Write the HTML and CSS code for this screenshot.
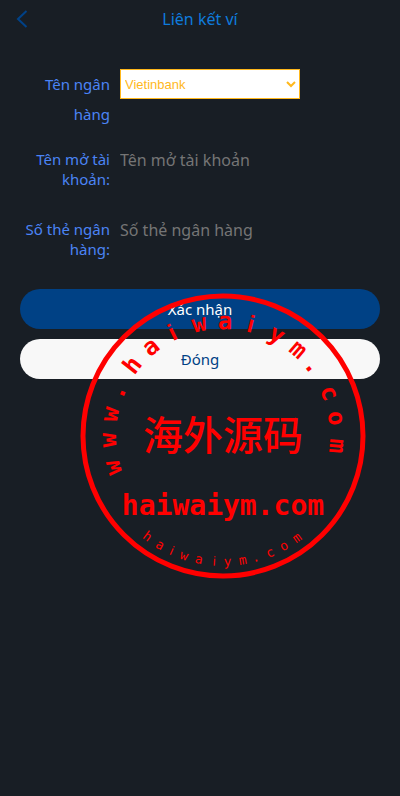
FILE: index.html
```html
<!doctype html>
<html lang="vi">
<head>
  <meta charset="utf-8">
  <meta name="viewport" content="width=device-width, initial-scale=1">
  <title>Liên kết ví</title>
  <link rel="stylesheet" href="styles.css">
</head>
<body>
  <header class="navbar">
    <button class="back" type="button" aria-label="Back">
      <svg width="12" height="18" viewBox="0 0 12 18"><path d="M10.500 1 2 9l8.500 8" fill="none" stroke="currentColor" stroke-width="2"/></svg>
    </button>
    <h1>Liên kết ví</h1>
  </header>

  <form class="bank-form">
    <div class="field field-bank">
      <label for="bank">Tên ngân hàng</label>
      <select id="bank">
        <option>Vietinbank</option>
      </select>
    </div>
    <div class="field">
      <label for="owner">Tên mở tài khoản:</label>
      <input id="owner" type="text" placeholder="Tên mở tài khoản">
    </div>
    <div class="field">
      <label for="card">Số thẻ ngân hàng:</label>
      <input id="card" type="text" placeholder="Số thẻ ngân hàng">
    </div>
    <div class="actions">
      <button class="btn btn-confirm" type="submit">Xác nhận</button>
      <button class="btn btn-close" type="button">Đóng</button>
    </div>
  </form>

  <svg class="stamp" width="286" height="286" viewBox="-143 -143 286 286">
    <circle r="140" fill="none" stroke="currentColor" stroke-width="5"/>
    <g class="stamp-top">
      <text y="-107" transform="rotate(-106)">w</text>
      <text y="-107" transform="rotate(-92)">w</text>
      <text y="-107" transform="rotate(-79)">w</text>
      <text y="-107" transform="rotate(-67)">.</text>
      <text y="-107" transform="rotate(-52)">h</text>
      <text y="-107" transform="rotate(-39)">a</text>
      <text class="thin" y="-107" transform="rotate(-26)">i</text>
      <text y="-107" transform="rotate(-12)">w</text>
      <text y="-107" transform="rotate(1)">a</text>
      <text class="thin" y="-107" transform="rotate(14)">i</text>
      <text y="-107" transform="rotate(28)">y</text>
      <text y="-107" transform="rotate(41)">m</text>
      <text y="-107" transform="rotate(52)">.</text>
      <text y="-107" transform="rotate(68)">c</text>
      <text y="-107" transform="rotate(81)">o</text>
      <text y="-107" transform="rotate(95)">m</text>
    </g>
    <text class="stamp-name" y="14">海外源码</text>
    <text class="stamp-site" y="79">haiwaiym.com</text>
    <g class="stamp-bottom">
      <text y="130" transform="rotate(37)">h</text>
      <text y="130" transform="rotate(30)">a</text>
      <text class="thin" y="130" transform="rotate(24)">i</text>
      <text y="130" transform="rotate(18)">w</text>
      <text y="130" transform="rotate(11)">a</text>
      <text class="thin" y="130" transform="rotate(4)">i</text>
      <text y="130" transform="rotate(-2)">y</text>
      <text y="130" transform="rotate(-9)">m</text>
      <text y="130" transform="rotate(-15)">.</text>
      <text y="130" transform="rotate(-22)">c</text>
      <text y="130" transform="rotate(-29)">o</text>
      <text y="130" transform="rotate(-36)">m</text>
    </g>
  </svg>
</body>
</html>
```
FILE: styles.css
```css
* {
  box-sizing: border-box;
}
body {
  margin: 0;
  position: relative;
  min-height: 100vh;
  background: #181e25;
  font-family: "Noto Sans", sans-serif;
  font-size: 16px;
}
input, button {
  font-family: inherit;
}

.navbar {
  display: grid;
  grid-template-columns: 44px 1fr 44px;
  align-items: center;
  height: 38px;
}
.navbar h1 {
  margin: 0;
  font-size: 16px;
  font-weight: 400;
  text-align: center;
  color: #0f7bdc;
}
.back {
  display: flex;
  justify-content: center;
  padding: 0;
  border: 0;
  background: none;
  color: #004288;
}

.bank-form {
  padding: 31px 20px;
}
.field {
  display: flex;
  align-items: flex-start;
  gap: 10px;
  margin-bottom: 30px;
}
.field label {
  width: 90px;
  font-size: 15px;
  line-height: 20px;
  text-align: right;
  color: #4b84f5;
}
.field input {
  flex: 1;
  min-width: 0;
  height: 22px;
  padding: 0;
  border: 0;
  outline: 0;
  background: none;
  color: #fff;
  font-size: 16px;
}
.field input::placeholder {
  color: #757575;
}
.field-bank {
  margin-bottom: 20px;
}
.field-bank label {
  line-height: 30px;
}
.field-bank select {
  width: 180px;
  height: 30px;
  border: 1px solid #ffb81c;
  border-radius: 0;
  background: #fff;
  color: #ffb81c;
  font-family: "Liberation Sans", Arial, sans-serif;
  font-size: 13px;
}

.actions {
  display: flex;
  flex-direction: column;
  gap: 10px;
}
.btn {
  height: 40px;
  border: 0;
  border-radius: 20px;
  font-size: 15px;
}
.btn-confirm {
  background: #004185;
  color: #fff;
}
.btn-close {
  background: #f8f8f8;
  color: #004185;
}

/* round stamp printed over the page */
.stamp {
  position: absolute;
  top: 293px;
  left: 80px;
  color: #f00;
  pointer-events: none;
}
.stamp text {
  fill: currentColor;
  text-anchor: middle;
  font-family: "DejaVu Sans Mono", monospace;
}
.stamp .thin {
  font-family: "Liberation Sans", sans-serif;
}
.stamp-top {
  font-size: 24px;
  font-weight: 700;
}
.stamp .stamp-name {
  font-family: "Noto Sans CJK SC", sans-serif;
  font-size: 40px;
  font-weight: 500;
}
.stamp-site {
  font-size: 28px;
  font-weight: 700;
}
.stamp-bottom {
  font-size: 13px;
}
```
